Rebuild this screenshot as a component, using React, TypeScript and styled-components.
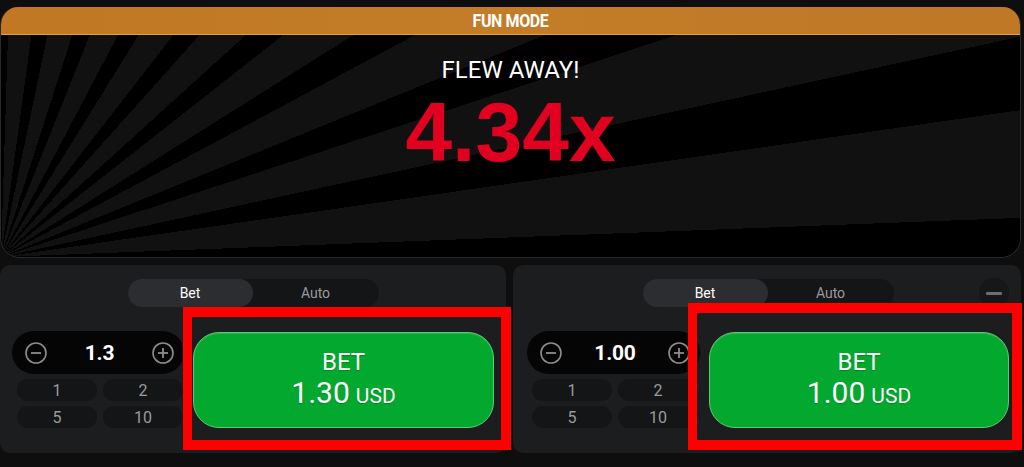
import React from "react";
import styled, { createGlobalStyle } from "styled-components";

const GlobalStyle = createGlobalStyle`
  html, body {
    margin: 0;
    padding: 0;
    background: #0e0e0f;
    font-family: Roboto, "Liberation Sans", Arial, sans-serif;
  }
  * { box-sizing: border-box; }
`;

const Page = styled.div`
  width: 1024px;
  height: 467px;
  padding-top: 7px;
  overflow: hidden;
`;

const Game = styled.section`
  width: 1021px;
  height: 251px;
  border: 1px solid #2a2a2b;
  border-top: none;
  border-radius: 18px 18px 20px 20px;
  overflow: hidden;
  display: flex;
  flex-direction: column;
  background: #000;
`;

const Banner = styled.header`
  height: 28px;
  flex: none;
  display: flex;
  align-items: center;
  justify-content: center;
  background: linear-gradient(90deg, #c07824 0%, #c37c28 50%, #bf7825 100%);
  border-bottom: 1px solid #e4a045;
  color: #fff;
  font-family: Roboto, "Liberation Sans", sans-serif;
  font-weight: 700;
  font-size: 16px;
  letter-spacing: -0.4px;
`;

const BannerText = styled.span`
  display: inline-block;
  transform: scaleY(1.12);
`;

const Stage = styled.div`
  flex: 1;
  display: flex;
  flex-direction: column;
  align-items: center;
  padding-top: 21px;
  background: repeating-conic-gradient(
    from 1.8deg at 0% 100%,
    #111112 0deg 6deg,
    #000 6deg 10deg
  );
`;

const Flew = styled.div`
  color: #fff;
  font-family: Roboto, "Liberation Sans", sans-serif;
  font-size: 24px;
  line-height: 28px;
  font-weight: 400;
`;

const Multiplier = styled.div`
  color: #e1001f;
  font-family: "Liberation Sans", Arial, sans-serif;
  font-weight: 700;
  font-size: 84px;
  line-height: 96px;
`;

const Panels = styled.div`
  width: 1021px;
  margin-top: 7px;
  display: grid;
  grid-template-columns: 506px 508px;
  column-gap: 7px;
`;

const Panel = styled.div<{ $padLeft: number }>`
  position: relative;
  height: 188px;
  background: #1c1d1f;
  border-radius: 10px;
  padding: 14px 12px 0 ${(p) => p.$padLeft}px;
`;

const TopRow = styled.div`
  display: grid;
  grid-template-columns: 1fr auto 1fr;
  grid-template-rows: 28px;
  align-items: center;
  height: 28px;
`;

const Tabs = styled.div`
  grid-column: 2;
  width: 251px;
  height: 28px;
  border-radius: 14px;
  background: #141517;
  display: grid;
  grid-template-columns: 125px 1fr;
`;

const Tab = styled.div<{ $active?: boolean }>`
  display: flex;
  align-items: center;
  justify-content: center;
  border-radius: 14px;
  font-size: 14px;
  color: ${(p) => (p.$active ? "#fff" : "#9a9b9d")};
  background: ${(p) => (p.$active ? "#2c2d31" : "transparent")};
`;

const RemoveButton = styled.div`
  grid-column: 3;
  justify-self: end;
  width: 30px;
  height: 30px;
  margin: -1px 0;
  border-radius: 50%;
  background: #161719;
  display: flex;
  align-items: center;
  justify-content: center;
  &::after {
    content: "";
    width: 16px;
    height: 3px;
    border-radius: 1px;
    background: #6d6e70;
  }
`;

const Controls = styled.div`
  display: flex;
  gap: 9px;
  margin-top: 24px;
`;

const LeftCol = styled.div<{ $w: number }>`
  width: ${(p) => p.$w}px;
  flex: none;
`;

const Stepper = styled.div`
  height: 43px;
  border-radius: 22px;
  background: #050505;
  display: flex;
  align-items: center;
  justify-content: space-between;
  padding: 0 10px 0 13px;
`;

const StepValue = styled.div`
  color: #fff;
  font-weight: 700;
  font-size: 21px;
  letter-spacing: -0.2px;
`;

const QuickGrid = styled.div`
  display: grid;
  grid-template-columns: 80px 80px;
  grid-auto-rows: 22px;
  gap: 5px 6px;
  margin-top: 5px;
  padding-left: 5px;
`;

const Quick = styled.div`
  border-radius: 11px;
  background: #141517;
  color: #9a9b9d;
  font-size: 16px;
  display: flex;
  align-items: center;
  justify-content: center;
`;

const BetButton = styled.button`
  flex: 1;
  height: 96px;
  margin-top: 1px;
  border-radius: 26px;
  border: 1px solid #5dcb6e;
  background: #03a82e;
  box-shadow: inset 0 1px 1px rgba(255, 255, 255, 0.15);
  color: #fff;
  font-family: Roboto, "Liberation Sans", sans-serif;
  display: flex;
  flex-direction: column;
  align-items: center;
  justify-content: center;
  padding: 0;
  text-shadow: 0 1px 1px rgba(0, 0, 0, 0.2);
`;

const BetLabel = styled.div`
  font-size: 24px;
  line-height: 28px;
`;

const BetAmount = styled.div`
  font-size: 30px;
  line-height: 34px;
`;

const Currency = styled.span`
  font-size: 21px;
  margin-left: 6px;
`;

const Highlight = styled.div<{ $l: number; $t: number; $w: number; $h: number }>`
  position: absolute;
  left: ${(p) => p.$l}px;
  top: ${(p) => p.$t}px;
  width: ${(p) => p.$w}px;
  height: ${(p) => p.$h}px;
  border: 10px solid #ff0000;
  border-left-width: 9px;
  z-index: 2;
  pointer-events: none;
`;

const CircleIcon = ({ plus }: { plus?: boolean }) => (
  <svg width="22" height="22" viewBox="0 0 22 22" fill="none">
    <circle cx="11" cy="11" r="10" stroke="#8c8d8f" strokeWidth="1.6" />
    <line x1="6" y1="11" x2="16" y2="11" stroke="#8c8d8f" strokeWidth="1.8" />
    {plus && <line x1="11" y1="6" x2="11" y2="16" stroke="#8c8d8f" strokeWidth="1.8" />}
  </svg>
);

type PanelProps = {
  value: string;
  amount: string;
  removable?: boolean;
  padLeft: number;
  colW: number;
  box: { l: number; t: number; w: number; h: number };
};

const BetPanel = ({ value, amount, removable, padLeft, colW, box }: PanelProps) => (
  <Panel $padLeft={padLeft}>
    <TopRow>
      <Tabs>
        <Tab $active>Bet</Tab>
        <Tab>Auto</Tab>
      </Tabs>
      {removable && <RemoveButton />}
    </TopRow>
    <Controls>
      <LeftCol $w={colW}>
        <Stepper>
          <CircleIcon />
          <StepValue>{value}</StepValue>
          <CircleIcon plus />
        </Stepper>
        <QuickGrid>
          {["1", "2", "5", "10"].map((q) => (
            <Quick key={q}>{q}</Quick>
          ))}
        </QuickGrid>
      </LeftCol>
      <BetButton>
        <BetLabel>BET</BetLabel>
        <BetAmount>
          {amount}
          <Currency>USD</Currency>
        </BetAmount>
      </BetButton>
    </Controls>
    <Highlight $l={box.l} $t={box.t} $w={box.w} $h={box.h} />
  </Panel>
);

export default function App() {
  return (
    <>
      <GlobalStyle />
      <Page>
        <Game>
          <Banner>
            <BannerText>FUN MODE</BannerText>
          </Banner>
          <Stage>
            <Flew>FLEW AWAY!</Flew>
            <Multiplier>4.34x</Multiplier>
          </Stage>
        </Game>
        <Panels>
          <BetPanel
            value="1.3"
            amount="1.30"
            padLeft={12}
            colW={172}
            box={{ l: 183, t: 42, w: 328, h: 143 }}
          />
          <BetPanel
            value="1.00"
            amount="1.00"
            removable
            padLeft={14}
            colW={173}
            box={{ l: 175, t: 38, w: 334, h: 147 }}
          />
        </Panels>
      </Page>
    </>
  );
}
